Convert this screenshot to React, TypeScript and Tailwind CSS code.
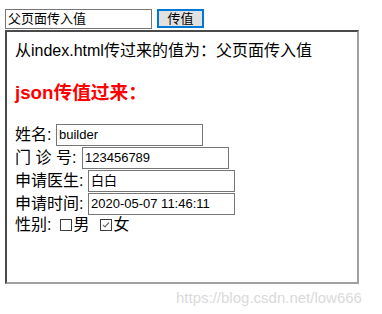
import React from "react";

const Box = ({ checked }: { checked?: boolean }) => (
  <span className="relative inline-block w-[12px] h-[12px] border border-[#3c3c3c] bg-white shrink-0">
    {checked && (
      <svg viewBox="0 0 10 10" className="absolute left-0 top-0 w-[10px] h-[10px]">
        <path d="M2 5 L4 7 L8 2.5" fill="none" stroke="#707070" strokeWidth="1.2" />
      </svg>
    )}
  </span>
);

const inputCls =
  "h-[22px] w-[147px] border border-[#767676] px-[2px] text-[13px] leading-[20px] text-black bg-white";

export default function App() {
  return (
    <div className="relative w-[382px] h-[314px] bg-white overflow-hidden text-black font-['Liberation_Sans','Noto_Sans_CJK_SC',sans-serif]">
      <div className="flex items-start pl-[5px] pt-[9px] h-[30px]">
        <div className="h-[20px] w-[147px] border border-[#767676] px-[2px] text-[13px] leading-[18px]">
          父页面传入值
        </div>
        <div className="ml-[5px] h-[19px] w-[47px] border-2 border-[#0078d7] bg-[#e1e1e1] text-[13px] leading-[15px] text-center">
          传值
        </div>
      </div>
      <div className="ml-[5px] w-[354px] h-[254px] border-2 border-t-[#4a4a4a] border-l-[#4a4a4a] border-r-[#a0a0a0] border-b-[#a0a0a0] px-[8px] pt-[8px]">
        <div className="h-[21px] leading-[21px] text-[16px]">从index.html传过来的值为：父页面传入值</div>
        <h3 className="mt-[19px] h-[25px] leading-[25px] text-[18.72px] font-bold text-[#ff0000]">json传值过来：</h3>
        <div className="mt-[19px] text-[16px]">
          <div className="flex items-center h-[22px] mb-[1px]">
            <span className="w-[41px]">姓名:</span>
            <div className={inputCls}>builder</div>
          </div>
          <div className="flex items-center h-[22px] mb-[1px]">
            <span className="w-[67px] whitespace-pre">门 诊 号:</span>
            <div className={inputCls}>123456789</div>
          </div>
          <div className="flex items-center h-[22px] mb-[1px]">
            <span className="w-[73px]">申请医生:</span>
            <div className={inputCls}>白白</div>
          </div>
          <div className="flex items-center h-[22px] mb-[1px]">
            <span className="w-[73px]">申请时间:</span>
            <div className={inputCls}>2020-05-07 11:46:11</div>
          </div>
          <div className="flex items-center h-[22px] -mt-[2px]">
            <span>性别:</span>
            <span className="ml-[9px] flex"><Box /></span>
            <span className="ml-[1px]">男</span>
            <span className="ml-[11px] flex"><Box checked /></span>
            <span className="ml-[1px]">女</span>
          </div>
        </div>
      </div>
      <div className="absolute left-[176px] top-[289px] text-[15px] leading-[18px] text-[#dadada] font-['Liberation_Sans',sans-serif]">
        https://blog.csdn.net/low666
      </div>
    </div>
  );
}
